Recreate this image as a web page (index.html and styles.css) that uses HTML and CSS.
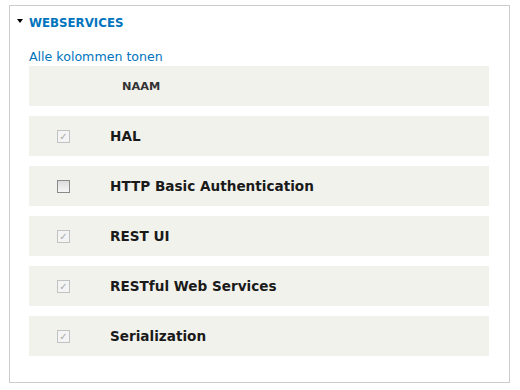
FILE: index.html
```html
<!DOCTYPE html>
<html>
	<head>
		<meta charset="utf-8">
		<link rel="stylesheet" href="styles.css">
	</head>
	<body>
		<fieldset class="package">
			<div class="package-title"><span class="arrow"></span>Webservices</div>
			<div class="package-body">
				<a class="show-cols" href="#">Alle kolommen tonen</a>
				<div class="modules">
					<div class="row head">
						<div class="cell-check"></div>
						<div class="cell-name">Naam</div>
					</div>
					<div class="row">
						<div class="cell-check"><span class="box disabled">&#10003;</span></div>
						<div class="cell-name">HAL</div>
					</div>
					<div class="row">
						<div class="cell-check"><span class="box"></span></div>
						<div class="cell-name">HTTP Basic Authentication</div>
					</div>
					<div class="row">
						<div class="cell-check"><span class="box disabled">&#10003;</span></div>
						<div class="cell-name">REST UI</div>
					</div>
					<div class="row">
						<div class="cell-check"><span class="box disabled">&#10003;</span></div>
						<div class="cell-name">RESTful Web Services</div>
					</div>
					<div class="row">
						<div class="cell-check"><span class="box disabled">&#10003;</span></div>
						<div class="cell-name">Serialization</div>
					</div>
				</div>
			</div>
		</fieldset>
	</body>
</html>
```

FILE: styles.css
```css
* {
	margin:0;
	padding:0;
	box-sizing: border-box;
}
body {
	font-family: "DejaVu Sans", Verdana, sans-serif;
	background-color: #fff;
	color: #222;
}
.package {
	margin:5px 10px 0 9px;
	height:378px;
	border:1px solid #ccc;
}
.package-title {
	display:flex;
	align-items:center;
	height:32px;
	padding:2px 0 0 7px;
	font-size:11.8px;
	font-weight:bold;
	text-transform: uppercase;
	color:#0074bd;
}
.package-title .arrow {
	width:0;
	height:0;
	border-left:3.5px solid transparent;
	border-right:3.5px solid transparent;
	border-top:4px solid #000;
	margin:-4px 6px 0 0;
}
.package-body {
	padding:10px 20px 0 19px;
}
.show-cols {
	display:block;
	font-size:12.6px;
	line-height:18px;
	color:#0074bd;
	text-decoration:none;
}
.modules {
	display:flex;
	flex-direction:column;
	gap:10px;
}
.row {
	display:flex;
	align-items:center;
	height:40px;
	background-color:#f2f2ed;
}
.cell-check {
	flex:none;
	width:81px;
	padding-left:28px;
}
.cell-name {
	font-size:13.6px;
	font-weight:bold;
	color:#1a1a1a;
}
.head .cell-name {
	font-size:11.3px;
	padding-left:12px;
	text-transform: uppercase;
	color:#333;
}
.box {
	display:block;
	width:13px;
	height:13px;
	border:1px solid #8a8a8a;
	background:linear-gradient(#dcdcdc, #f6f6f6);
	font-size:10px;
	line-height:11px;
	text-align:center;
	color:#aaa;
}
.box.disabled {
	border-color:#c2c2c2;
	background:#f4f4f4;
}
```
